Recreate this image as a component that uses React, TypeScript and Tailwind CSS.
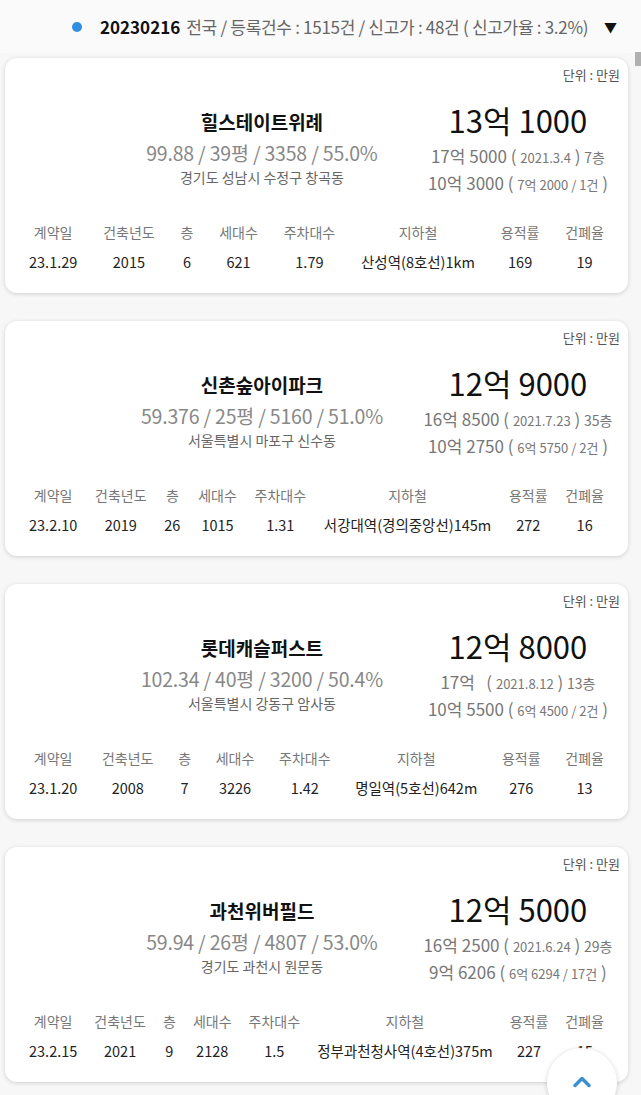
import { ChevronUp } from "lucide-react";

type Deal = {
    name: string;
    price: string;
    stats: string;
    address: string;
    high: string;
    highDate: string;
    highFloor: string;
    prev: string;
    prevNote: string;
    date: string;
    year: string;
    floor: string;
    units: string;
    parking: string;
    subway: string;
    far: string;
    bcr: string;
};

const deals: Deal[] = [
    {
        name: "힐스테이트위례",
        price: "13억 1000",
        stats: "99.88 / 39평 / 3358 / 55.0%",
        address: "경기도 성남시 수정구 창곡동",
        high: "17억 5000",
        highDate: "2021.3.4",
        highFloor: "7층",
        prev: "10억 3000",
        prevNote: "7억 2000 / 1건",
        date: "23.1.29",
        year: "2015",
        floor: "6",
        units: "621",
        parking: "1.79",
        subway: "산성역(8호선)1km",
        far: "169",
        bcr: "19",
    },
    {
        name: "신촌숲아이파크",
        price: "12억 9000",
        stats: "59.376 / 25평 / 5160 / 51.0%",
        address: "서울특별시 마포구 신수동",
        high: "16억 8500",
        highDate: "2021.7.23",
        highFloor: "35층",
        prev: "10억 2750",
        prevNote: "6억 5750 / 2건",
        date: "23.2.10",
        year: "2019",
        floor: "26",
        units: "1015",
        parking: "1.31",
        subway: "서강대역(경의중앙선)145m",
        far: "272",
        bcr: "16",
    },
    {
        name: "롯데캐슬퍼스트",
        price: "12억 8000",
        stats: "102.34 / 40평 / 3200 / 50.4%",
        address: "서울특별시 강동구 암사동",
        high: "17억\u00a0\u00a0",
        highDate: "2021.8.12",
        highFloor: "13층",
        prev: "10억 5500",
        prevNote: "6억 4500 / 2건",
        date: "23.1.20",
        year: "2008",
        floor: "7",
        units: "3226",
        parking: "1.42",
        subway: "명일역(5호선)642m",
        far: "276",
        bcr: "13",
    },
    {
        name: "과천위버필드",
        price: "12억 5000",
        stats: "59.94 / 26평 / 4807 / 53.0%",
        address: "경기도 과천시 원문동",
        high: "16억 2500",
        highDate: "2021.6.24",
        highFloor: "29층",
        prev: "9억 6206",
        prevNote: "6억 6294 / 17건",
        date: "23.2.15",
        year: "2021",
        floor: "9",
        units: "2128",
        parking: "1.5",
        subway: "정부과천청사역(4호선)375m",
        far: "227",
        bcr: "15",
    },
];

const headers = ["계약일", "건축년도", "층", "세대수", "주차대수", "지하철", "용적률", "건폐율"];

function DealCard({ d }: { d: Deal }) {
    const values = [d.date, d.year, d.floor, d.units, d.parking, d.subway, d.far, d.bcr];
    return (
        <div className="bg-white rounded-[12px] shadow-[0_1px_4px_rgba(0,0,0,0.16)] h-[235px] pt-[9px] shrink-0">
            <div className="text-right text-[13px] leading-[16px] text-[#555] pr-[8px]">단위 : 만원</div>
            <div className="flex items-start mt-[19px] pl-[131px]">
                <div className="w-[254px] text-center pt-[6px]">
                    <div className="text-[19px] leading-[28px] font-bold text-[#111]">{d.name}</div>
                    <div className="text-[19.5px] leading-[26px] mt-[4px] text-[#888] tracking-[-0.2px] whitespace-nowrap">
                        {d.stats}
                    </div>
                    <div className="text-[14px] leading-[22px] text-[#666]">{d.address}</div>
                </div>
                <div className="w-[222px] ml-[20px] text-center">
                    <div className="text-[31px] leading-[36px] text-[#111]">{d.price}</div>
                    <div className="text-[17px] leading-[25px] mt-[5px] text-[#777] whitespace-nowrap">
                        {d.high} (&nbsp;<span className="text-[13px]">{d.highDate}</span>&nbsp;){" "}
                        <span className="text-[14px]">{d.highFloor}</span>
                    </div>
                    <div className="text-[17px] leading-[25px] text-[#777] whitespace-nowrap">
                        {d.prev} ( <span className="text-[13px]">{d.prevNote}</span> )
                    </div>
                </div>
            </div>
            <div className="flex justify-between px-[24px] mt-[21px]">
                {headers.map((h, i) => (
                    <div key={h} className="flex flex-col items-center">
                        <div className="h-[29px] flex items-center text-[14px] text-[#777] whitespace-nowrap">
                            {h}
                        </div>
                        <div className="h-[29px] flex items-center text-[14.5px] text-[#222] whitespace-nowrap">
                            {values[i]}
                        </div>
                    </div>
                ))}
            </div>
        </div>
    );
}

export default function App() {
    return (
        <div
            className="relative h-[1095px] overflow-hidden bg-[#f7f7f7]"
            style={{ fontFamily: '"Noto Sans CJK KR", "Noto Sans", sans-serif' }}
        >
            <div className="h-[53px] flex items-center pl-[72px] pr-[24px] bg-[#fafafa]">
                <span className="w-[10px] h-[10px] rounded-full bg-[#2f8fe0] mr-[18px]" />
                <span className="text-[17px] font-bold text-[#111] mr-[6px]">20230216</span>
                <span className="text-[17px] text-[#666] tracking-[-0.3px] whitespace-nowrap">
                    전국 / 등록건수 : 1515건 / 신고가 : 48건 ( 신고가율 : 3.2%)
                </span>
                <span className="ml-auto text-[13px] text-[#111]">▼</span>
            </div>
            <div className="flex flex-col gap-[28px] pl-[5px] pr-[13px] pt-[5px]">
                {deals.map((d) => (
                    <DealCard key={d.name} d={d} />
                ))}
            </div>
            <div className="absolute right-0 top-[52px] w-[6px] h-[14px] bg-[#b0b0b0]" />
            <div className="absolute left-[547px] top-[1048px] w-[70px] h-[70px] rounded-full bg-white shadow-[0_1px_5px_rgba(0,0,0,0.18)] flex items-start justify-center pt-[20px]">
                <ChevronUp className="w-[28px] h-[28px] text-[#3a8fd0]" strokeWidth={3} />
            </div>
        </div>
    );
}
